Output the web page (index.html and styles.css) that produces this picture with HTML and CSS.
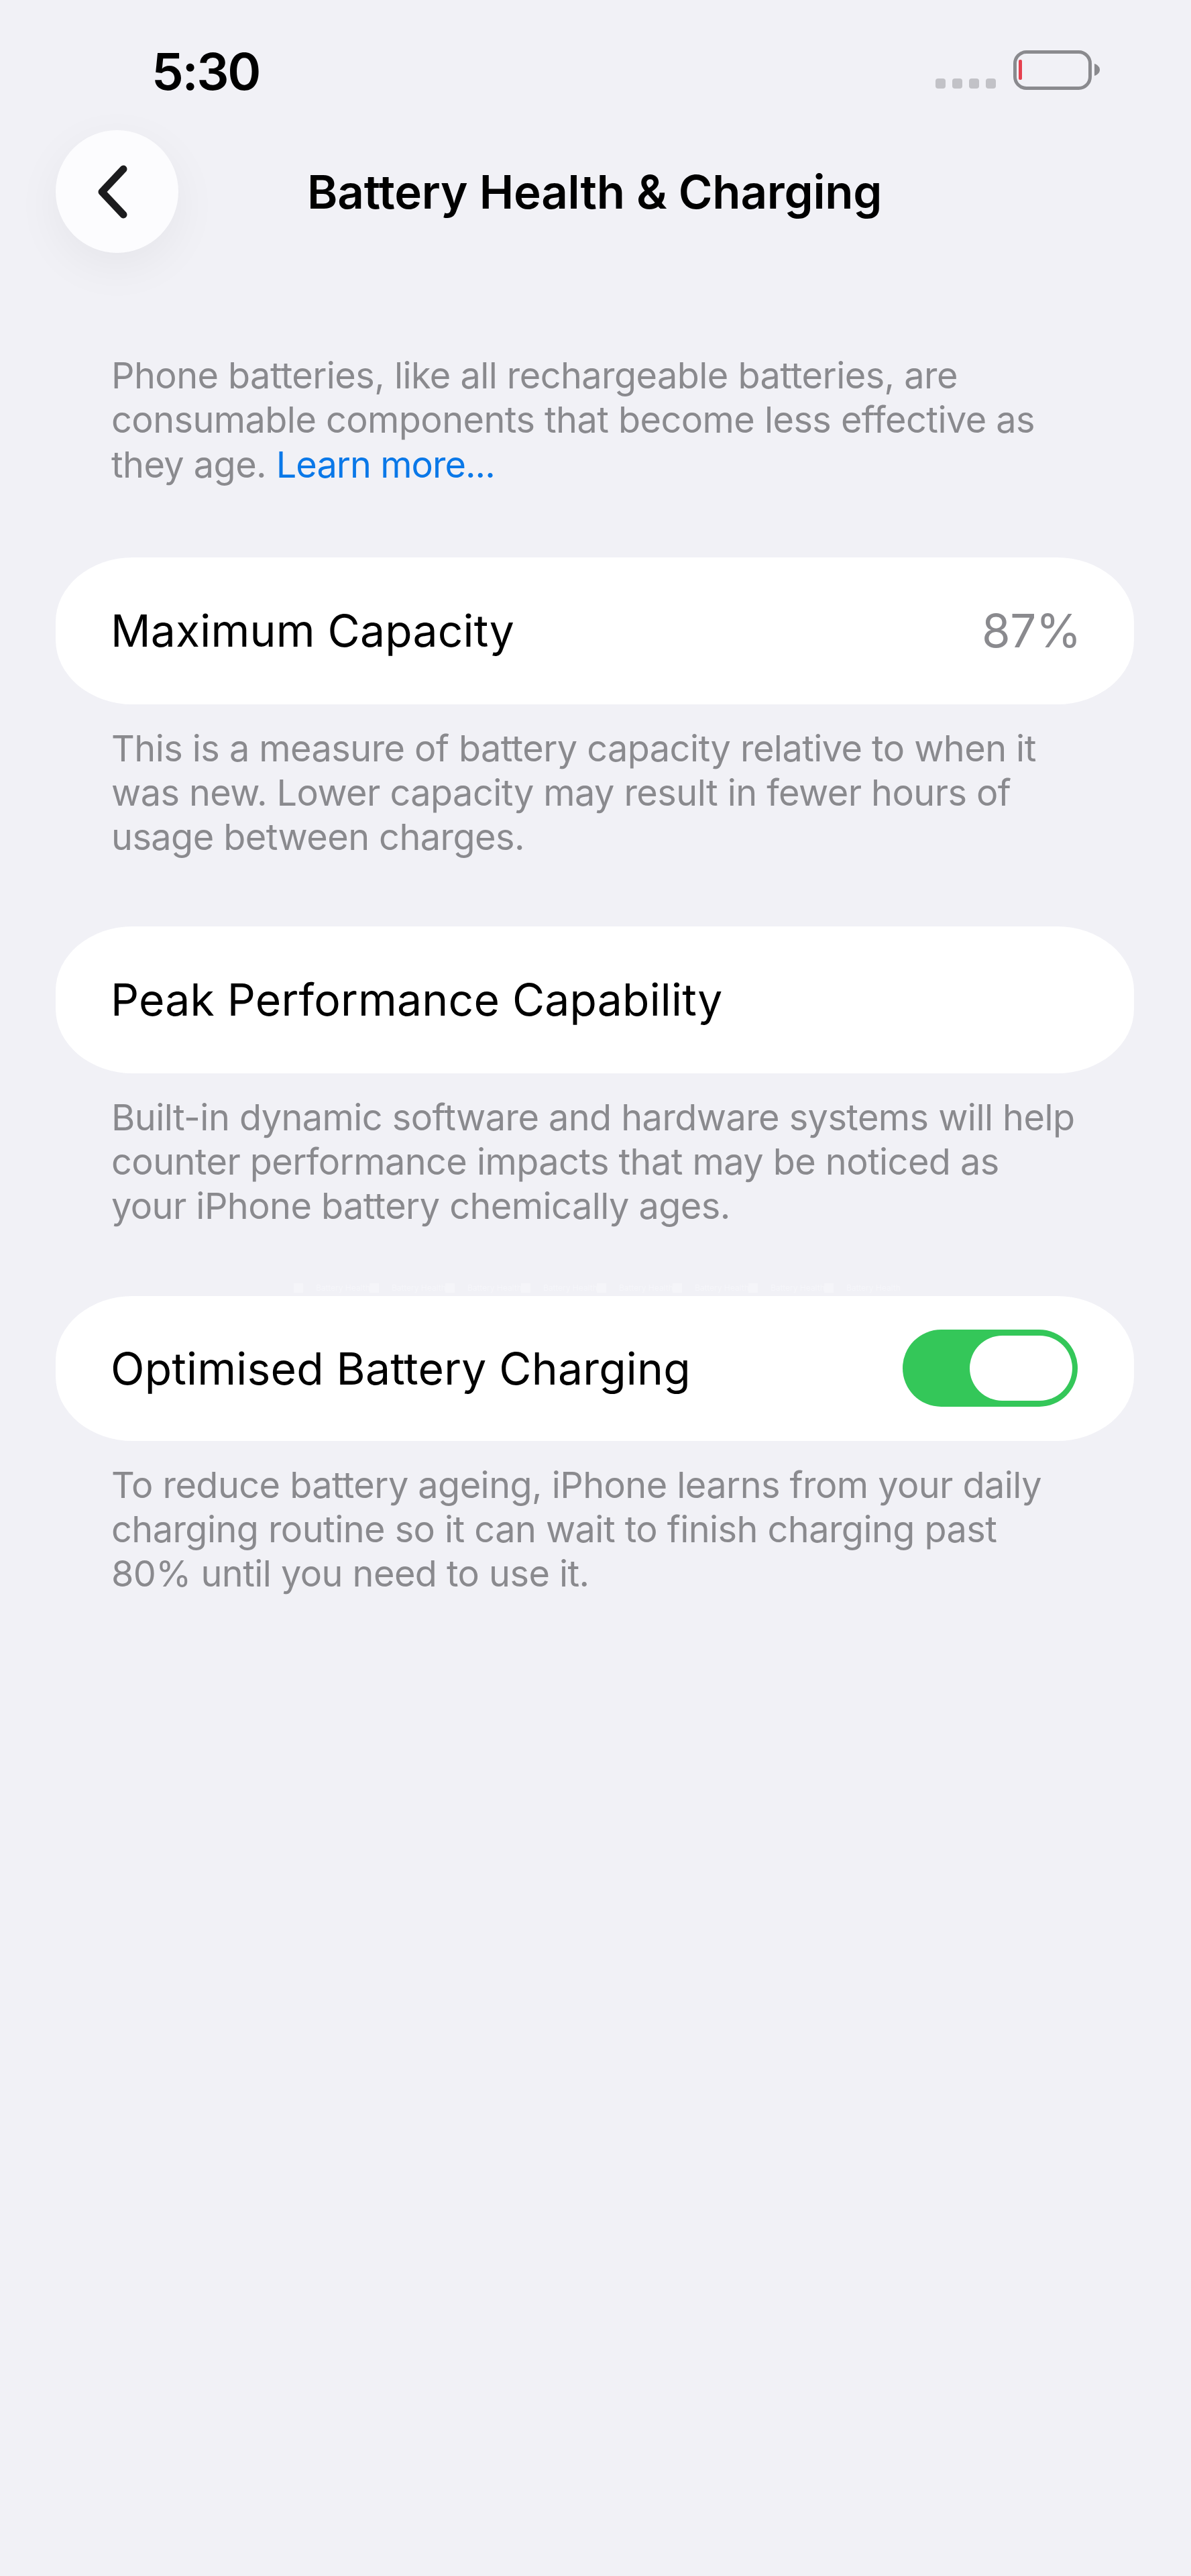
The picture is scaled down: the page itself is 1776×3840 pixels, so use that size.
FILE: index.html
```html
<!DOCTYPE html>
<html lang="en">
<head>
    <meta charset="UTF-8">
    <title>Battery Health &amp; Charging</title>
    <link rel="stylesheet" href="styles.css">
</head>
<body>
    <div class="status">
        <span class="time">5:30</span>
        <div class="status-right">
            <div class="dots"><i></i><i></i><i></i><i></i></div>
            <svg class="battery" width="130" height="60" viewBox="0 0 130 60">
                <rect x="2.5" y="2.5" width="112" height="54" rx="17" fill="none" stroke="#8a8a8e" stroke-width="5"/>
                <rect x="8" y="14" width="5" height="30" rx="2" fill="#e5414f"/>
                <path d="M121 20 C127 22 129 26 129 29 C129 32 127 36 121 38 Z" fill="#8a8a8e"/>
            </svg>
        </div>
    </div>

    <div class="nav">
        <div class="back">
            <svg width="50" height="84" viewBox="0 0 50 84">
                <path d="M41 8 L9 42 L41 76" fill="none" stroke="#1c1c1e" stroke-width="11" stroke-linecap="round" stroke-linejoin="round"/>
            </svg>
        </div>
        <h1>Battery Health &amp; Charging</h1>
    </div>

    <div class="content">
        <p class="note intro">Phone batteries, like all rechargeable batteries, are<br>consumable components that become less effective as<br>they age. <a href="#">Learn more...</a></p>

        <div class="card">
            <span>Maximum Capacity</span>
            <span class="value">87%</span>
        </div>
        <p class="note">This is a measure of battery capacity relative to when it<br>was new. Lower capacity may result in fewer hours of<br>usage between charges.</p>

        <div class="card">
            <span>Peak Performance Capability</span>
        </div>
        <p class="note">Built-in dynamic software and hardware systems will help<br>counter performance impacts that may be noticed as<br>your iPhone battery chemically ages.</p>

        <div class="ghost">
            <span>Battery Health</span><span>Battery Health</span><span>Battery Health</span><span>Battery Health</span>
            <span>Battery Health</span><span>Battery Health</span><span>Battery Health</span><span>Battery Health</span>
        </div>

        <div class="card card-toggle">
            <span>Optimised Battery Charging</span>
            <div class="toggle"><div class="knob"></div></div>
        </div>
        <p class="note">To reduce battery ageing, iPhone learns from your daily<br>charging routine so it can wait to finish charging past<br>80% until you need to use it.</p>
    </div>
</body>
</html>
```

FILE: styles.css
```css
* {
    margin: 0;
    padding: 0;
    box-sizing: border-box;
}
body {
    width: 1776px;
    height: 3840px;
    background: #f1f1f6;
    font-family: Inter, "Liberation Sans", sans-serif;
    color: #000;
    overflow: hidden;
}
.status {
    display: flex;
    justify-content: space-between;
    height: 194px;
    padding: 60px 135px 0 226px;
}
.time {
    font-size: 76px;
    font-weight: 600;
    line-height: 92px;
    letter-spacing: -2.4px;
}
.status-right {
    display: flex;
    align-items: flex-start;
    gap: 26px;
    padding-top: 15px;
}
.dots {
    display: flex;
    gap: 10px;
    margin-top: 42px;
}
.dots i {
    display: block;
    width: 15px;
    height: 15px;
    border-radius: 4px;
    background: #c2c2c7;
}
.nav {
    display: flex;
    align-items: center;
    height: 183px;
    padding-left: 83px;
}
.back {
    display: flex;
    align-items: center;
    justify-content: center;
    width: 183px;
    height: 183px;
    border-radius: 50%;
    background: #fcfcfe;
    box-shadow: 0 20px 70px rgba(0, 0, 0, 0.05);
}
.back svg {
    margin-right: 13px;
}
.nav h1 {
    margin-left: 192px;
    font-size: 69px;
    font-weight: 600;
    letter-spacing: -0.2px;
}
.content {
    padding: 150px 85px 0 83px;
}
.note {
    padding: 0 83px;
    margin-bottom: 99px;
    font-size: 54px;
    line-height: 66.3px;
    letter-spacing: -0.55px;
    color: #8a8a8e;
    white-space: nowrap;
}
.note a {
    letter-spacing: -0.95px;
    color: #0a78e8;
    text-decoration: none;
}
.intro {
    margin-bottom: 105px;
}
.card {
    display: flex;
    align-items: center;
    justify-content: space-between;
    height: 219px;
    padding: 0 84px 0 82px;
    margin-bottom: 33px;
    border-radius: 115px / 96px;
    background: #fff;
    font-size: 66px;
    letter-spacing: 0.2px;
}
.card-toggle {
    height: 216px;
}
.value {
    margin-right: -5px;
    font-size: 69px;
    letter-spacing: -0.5px;
    color: #8a8a8e;
}
/* faint strip showing through just above the last card */
.ghost {
    display: flex;
    height: 14px;
    margin: -18px 0 5px 355px;
    font-size: 12px;
    line-height: 14px;
    color: #f6f6fa;
    white-space: nowrap;
}
.ghost span {
    width: 113px;
    padding-left: 19px;
    border-left: 14px solid #f5f5f9;
}
.toggle {
    display: flex;
    align-items: center;
    justify-content: flex-end;
    width: 261px;
    height: 115px;
    padding-right: 8px;
    border-radius: 58px;
    background: #34c759;
}
.knob {
    width: 153px;
    height: 97px;
    border-radius: 49px;
    background: #fff;
}
```
